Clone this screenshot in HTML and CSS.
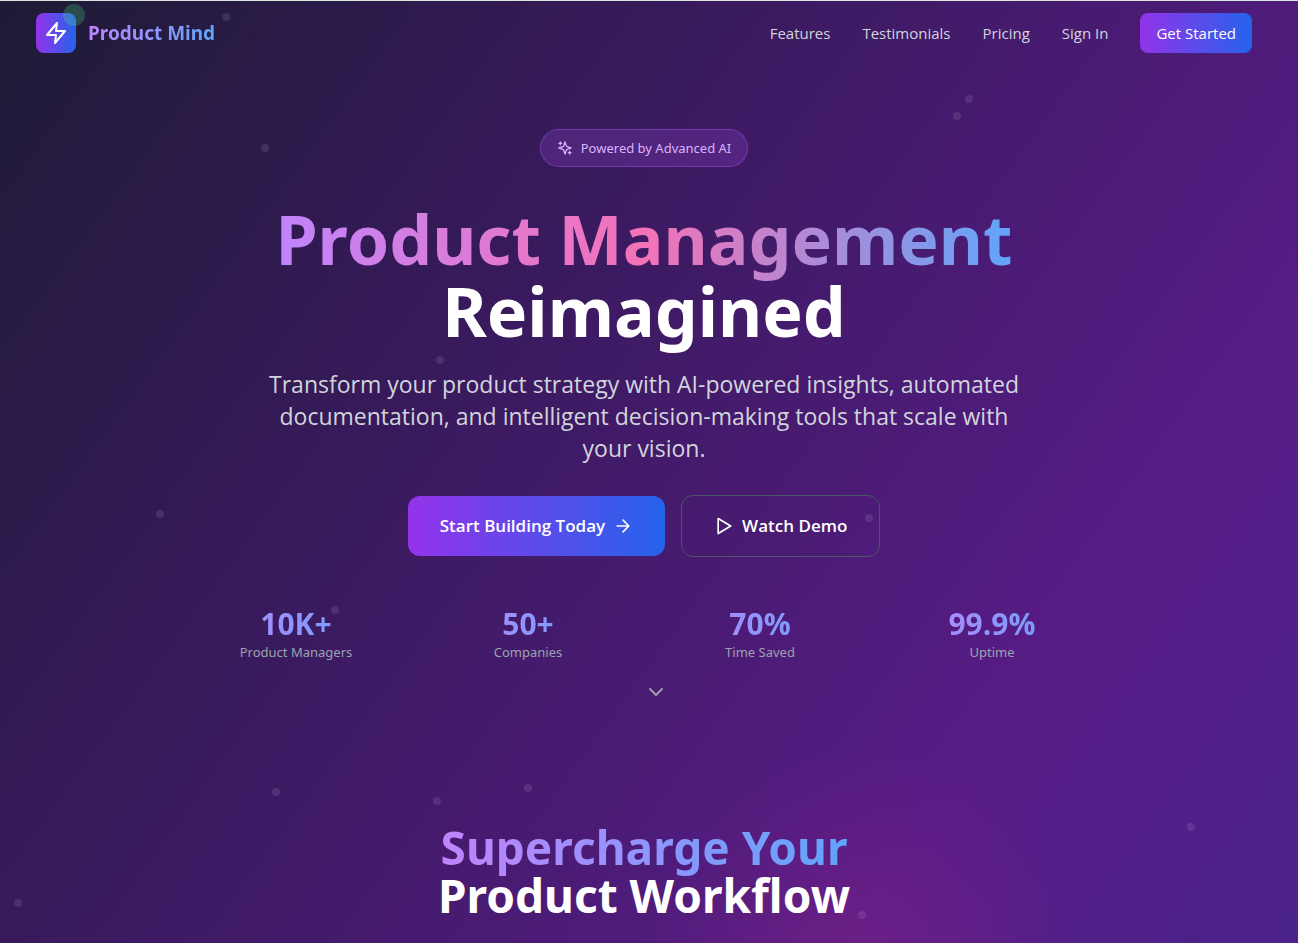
FILE: index.html
```html
<!DOCTYPE html>
<html lang="en">
<head>
<meta charset="utf-8">
<meta name="viewport" content="width=device-width, initial-scale=1">
<title>Product Mind</title>
<link rel="stylesheet" href="styles.css">
</head>
<body class="page">
<div class="particles" aria-hidden="true">
  <span class="dot" style="left:222px;top:13px"></span>
  <span class="dot" style="left:261px;top:144px"></span>
  <span class="dot" style="left:965px;top:95px"></span>
  <span class="dot" style="left:953px;top:112px"></span>
  <span class="dot" style="left:436px;top:356px"></span>
  <span class="dot" style="left:156px;top:510px"></span>
  <span class="dot" style="left:865px;top:514px"></span>
  <span class="dot" style="left:331px;top:606px"></span>
  <span class="dot" style="left:272px;top:788px"></span>
  <span class="dot" style="left:433px;top:797px"></span>
  <span class="dot" style="left:524px;top:784px"></span>
  <span class="dot" style="left:1187px;top:823px"></span>
  <span class="dot" style="left:14px;top:899px"></span>
  <span class="dot" style="left:858px;top:911px"></span>
</div>
<header class="nav">
  <a class="brand" href="#">
    <span class="brand-mark">
      <svg class="icon-lg" viewBox="0 0 24 24"><path d="M13 2L3 14h9l-1 8 10-12h-9z"/></svg>
      <span class="status"></span>
    </span>
    <span class="brand-name">Product Mind</span>
  </a>
  <nav class="links">
    <a href="#features">Features</a>
    <a href="#testimonials">Testimonials</a>
    <a href="#pricing">Pricing</a>
    <a href="#signin">Sign In</a>
    <button class="btn-small" type="button">Get Started</button>
  </nav>
</header>
<main>
  <section class="hero">
    <div class="badge">
      <svg class="icon-sm" viewBox="0 0 24 24"><path d="M12 3l-1.91 5.81a2 2 0 0 1-1.28 1.28L3 12l5.81 1.91a2 2 0 0 1 1.28 1.28L12 21l1.91-5.81a2 2 0 0 1 1.28-1.28L21 12l-5.81-1.91a2 2 0 0 1-1.28-1.28zM5 3v4M19 17v4M3 5h4M17 19h4"/></svg>
      <span>Powered by Advanced AI</span>
    </div>
    <h1 class="title"><span class="title-accent">Product Management</span><br>Reimagined</h1>
    <p class="lead">Transform your product strategy with AI-powered insights, automated documentation, and intelligent decision-making tools that scale with your vision.</p>
    <div class="actions">
      <button class="btn btn-primary" type="button">Start Building Today
        <svg class="icon-md" viewBox="0 0 24 24"><path d="M5 12h14M12 5l7 7-7 7"/></svg>
      </button>
      <button class="btn btn-outline" type="button">
        <svg class="icon-md" viewBox="0 0 24 24"><path d="M5 3l15 9-15 9z"/></svg>Watch Demo
      </button>
    </div>
    <dl class="stats">
      <div class="stat"><dd>10K+</dd><dt>Product Managers</dt></div>
      <div class="stat"><dd>50+</dd><dt>Companies</dt></div>
      <div class="stat"><dd>70%</dd><dt>Time Saved</dt></div>
      <div class="stat"><dd>99.9%</dd><dt>Uptime</dt></div>
    </dl>
    <a class="scroll-cue" href="#features" aria-label="Scroll down">
      <svg class="icon-lg" viewBox="0 0 24 24"><path d="M6 9l6 6 6-6"/></svg>
    </a>
  </section>
  <section class="features" id="features">
    <h2 class="subtitle"><span class="subtitle-accent">Supercharge Your</span><br>Product Workflow</h2>
  </section>
</main>
</body>
</html>
```

FILE: styles.css
```css
* { box-sizing: border-box; margin: 0; padding: 0; }
.page {
  position: relative;
  min-height: 100vh;
  padding-right: 10px;
  border-top: 1px solid #dde5df;
  overflow: hidden;
  color: #fff;
  font-family: "Segoe UI", "Open Sans", "Noto Sans", sans-serif;
  font-size: 15px;
  line-height: 24px;
  background:
    radial-gradient(circle 220px at 860px 970px, rgba(134, 36, 134, .45), rgba(134, 36, 134, .2) 55%, rgba(134, 36, 134, 0)),
    linear-gradient(126deg, #1e1b36 0%, #381a5c 35%, #581c87 78%, #4a228a 100%);
}
a { color: inherit; text-decoration: none; }
button { font: inherit; color: inherit; border: 0; background: none; cursor: pointer; }
svg { fill: none; stroke: currentColor; stroke-width: 2; stroke-linecap: round; stroke-linejoin: round; flex: none; }
.icon-sm { width: 16px; height: 16px; }
.icon-md { width: 20px; height: 20px; }
.icon-lg { width: 24px; height: 24px; }

.particles { position: absolute; inset: -1px 0 0; pointer-events: none; }
.dot { position: absolute; width: 8px; height: 8px; border-radius: 50%; background: rgba(255, 255, 255, .1); }

.nav {
  position: relative;
  display: flex; align-items: center; justify-content: space-between;
  max-width: 1280px; margin: 0 auto; padding: 12px 32px;
}
.brand { display: flex; align-items: center; gap: 12px; }
.brand-mark {
  position: relative; display: flex; align-items: center; justify-content: center;
  width: 40px; height: 40px; border-radius: 8px;
  background: linear-gradient(90deg, #9333ea, #2563eb);
}
.status {
  position: absolute; top: -9px; right: -9px; width: 22px; height: 22px;
  border-radius: 50%; background: rgba(74, 222, 128, .25);
}
.brand-name, .title-accent, .subtitle-accent, .stat dd {
  color: transparent;
  background: linear-gradient(90deg, #c084fc, #60a5fa);
  -webkit-background-clip: text; background-clip: text;
}
.brand-name { font-family: "Segoe UI", "Noto Sans", sans-serif; font-size: 19px; line-height: 28px; font-weight: 700; }
.links { display: flex; align-items: center; gap: 32px; color: #d1d5db; }
.btn-small {
  padding: 8px 16px; border-radius: 8px; color: #fff;
  background: linear-gradient(90deg, #9333ea, #2563eb);
}

.hero { display: flex; flex-direction: column; align-items: center; padding-top: 64px; }
.badge, .stat dt { font-family: "Segoe UI", "Noto Sans", sans-serif; font-size: 13px; line-height: 20px; }
.badge {
  display: flex; align-items: center; gap: 8px;
  padding: 8px 16px; border: 1px solid rgba(168, 85, 247, .4); border-radius: 20px;
  background: rgba(168, 85, 247, .2); color: #d8b4fe;
}
.title, .subtitle { font-family: "Segoe UI", "Noto Sans", sans-serif; font-weight: 700; text-align: center; }
.title { margin-top: 36px; font-size: 68px; line-height: 72px; }
.title-accent { background-image: linear-gradient(90deg, #c084fc, #f472b6 50%, #60a5fa); }
.lead { max-width: 768px; margin-top: 21px; color: #d1d5db; font-size: 23px; line-height: 32px; text-align: center; }
.actions { display: flex; align-items: center; gap: 16px; margin-top: 31px; }
.btn {
  display: flex; align-items: center; gap: 8px;
  padding: 16px 32px; border-radius: 12px; font-size: 17px; line-height: 28px; font-weight: 600;
}
.btn-primary { background: linear-gradient(90deg, #9333ea, #2563eb); }
.btn-outline { border: 1px solid #4b5563; }
.stats {
  display: grid; grid-template-columns: repeat(4, 1fr); gap: 32px;
  width: 100%; max-width: 896px; margin-top: 49px; text-align: center;
}
.stat { display: flex; flex-direction: column; }
.stat dd { font-size: 30px; line-height: 36px; font-weight: 700; }
.stat dt { color: #9ca3af; }
.scroll-cue { display: flex; margin: 18px 0 0 24px; color: #9ca3af; }

.features { padding: 119px 32px 16px; }
.subtitle { font-size: 46px; line-height: 48px; }
```
